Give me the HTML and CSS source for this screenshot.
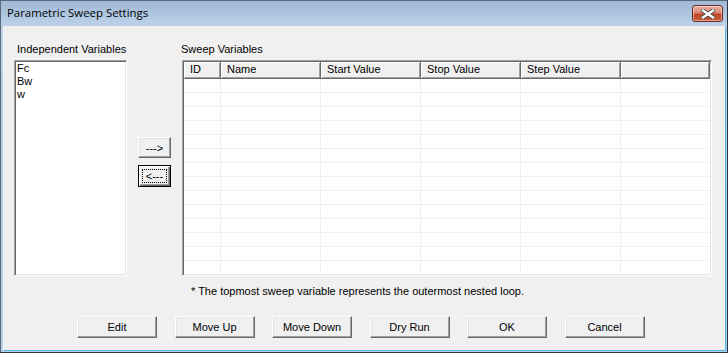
FILE: index.html
```html
<!DOCTYPE html>
<html lang="en">
<head>
    <meta charset="UTF-8">
    <meta name="viewport" content="width=device-width, initial-scale=1.0">
    <title>Parametric Sweep Settings</title>
    <link rel="stylesheet" href="styles.css">
</head>
<body>
    <div class="window">
        <!-- Title Bar -->
        <div class="titlebar">
            <span class="title">Parametric Sweep Settings</span>
            <button class="close-btn" title="Close">
                <svg width="14" height="10" viewBox="0 0 14 10">
                    <path d="M2 1.5 L12 8.5 M12 1.5 L2 8.5" stroke="#4a4a4a" stroke-width="4.2" stroke-linecap="square" fill="none"/>
                    <path d="M2 1.5 L12 8.5 M12 1.5 L2 8.5" stroke="#ffffff" stroke-width="2.4" stroke-linecap="square" fill="none"/>
                </svg>
            </button>
        </div>

        <div class="client">
            <div class="main">
                <!-- Independent Variables -->
                <div class="var-col">
                    <div class="label">Independent Variables</div>
                    <div class="listbox">
                        <div class="list-item">Fc</div>
                        <div class="list-item">Bw</div>
                        <div class="list-item">w</div>
                    </div>
                </div>

                <!-- Move Buttons -->
                <div class="arrow-col">
                    <button class="btn arrow-btn">---&gt;</button>
                    <button class="btn arrow-btn focused"><span class="focus-rect">&lt;---</span></button>
                </div>

                <!-- Sweep Variables -->
                <div class="sweep-col">
                    <div class="label sweep-label">Sweep Variables</div>
                    <div class="grid">
                        <div class="grid-col col-id">
                            <div class="grid-head">ID</div>
                            <div class="grid-body"></div>
                        </div>
                        <div class="grid-col col-wide">
                            <div class="grid-head">Name</div>
                            <div class="grid-body"></div>
                        </div>
                        <div class="grid-col col-wide">
                            <div class="grid-head">Start Value</div>
                            <div class="grid-body"></div>
                        </div>
                        <div class="grid-col col-wide">
                            <div class="grid-head">Stop Value</div>
                            <div class="grid-body"></div>
                        </div>
                        <div class="grid-col col-wide">
                            <div class="grid-head">Step Value</div>
                            <div class="grid-body"></div>
                        </div>
                        <div class="grid-col col-fill">
                            <div class="grid-head"></div>
                            <div class="grid-body"></div>
                        </div>
                    </div>
                    <div class="note">* The topmost sweep variable represents the outermost nested loop.</div>
                </div>
            </div>

            <!-- Dialog Buttons -->
            <div class="actions">
                <button class="btn action-btn">Edit</button>
                <button class="btn action-btn">Move Up</button>
                <button class="btn action-btn">Move Down</button>
                <button class="btn action-btn">Dry Run</button>
                <button class="btn action-btn">OK</button>
                <button class="btn action-btn">Cancel</button>
            </div>
        </div>
    </div>
</body>
</html>
```

FILE: styles.css
```css
/* General Layout */
body {
    margin: 0;
    padding: 0;
    font-family: "Liberation Sans", Arial, sans-serif;
    font-size: 11px;
    color: #000;
    background-color: #fff;
}

/* Window Frame */
.window {
    box-sizing: border-box;
    width: 728px;
    height: 353px;
    border: 1px solid #5a6878;
    border-right-color: #28343f;
    border-bottom-color: #28343f;
    background: linear-gradient(#9fb8d5, #bdd2e9 25px, #b4d0ec);
    display: flex;
    flex-direction: column;
}

/* Title Bar */
.titlebar {
    height: 25px;
    display: flex;
    align-items: flex-start;
    justify-content: space-between;
}

.title {
    font-family: "Open Sans", "Noto Sans", sans-serif;
    font-size: 11.4px;
    line-height: 16px;
    margin: 4px 0 0 6px;
    color: #000;
}

.close-btn {
    margin: 4px 4px 0 0;
    width: 31px;
    height: 17px;
    padding: 0;
    border: 1px solid #6a2b22;
    border-radius: 3px;
    background: linear-gradient(#eab0a2, #d98772 45%, #c2452a 55%, #c8583a);
    box-shadow: inset 0 0 0 1px rgba(255, 255, 255, 0.45);
    display: flex;
    align-items: center;
    justify-content: center;
}

/* Client Area */
.client {
    flex: 1;
    margin: 0 2px 2px 2px;
    background-color: #f0f0f0;
    box-shadow: 1px 1px 0 #4fb6e6;
}

.main {
    display: flex;
    padding: 16px 0 0 11px;
}

.label {
    line-height: 14px;
    height: 14px;
    margin-bottom: 4px;
    padding-left: 3px;
    white-space: nowrap;
}

.sweep-label {
    padding-left: 0;
    margin-left: -1px;
}

/* List Box */
.var-col {
    width: 113px;
}

.listbox {
    box-sizing: border-box;
    height: 216px;
    background-color: #fff;
    border: 1px solid;
    border-color: #a0a0a0 #fff #fff #a0a0a0;
    box-shadow: inset 1px 1px 0 #696969, inset -1px -1px 0 #e3e3e3;
    padding: 1px 0 0 2px;
}

.list-item {
    line-height: 13px;
    height: 13px;
}

/* Buttons */
.btn {
    box-sizing: border-box;
    font-family: "Liberation Sans", Arial, sans-serif;
    font-size: 11px;
    color: #000;
    background-color: #f0f0f0;
    border: 1px solid;
    border-color: #fff #696969 #696969 #fff;
    box-shadow: inset -1px -1px 0 #a0a0a0, inset 1px 1px 0 #e3e3e3;
    padding: 0;
    cursor: pointer;
}

.arrow-col {
    width: 33px;
    margin-left: 11px;
    padding-top: 95px;
    display: flex;
    flex-direction: column;
    gap: 7px;
}

.arrow-btn {
    width: 33px;
    height: 21px;
}

.arrow-btn.focused {
    height: 22px;
    border-color: #000;
    box-shadow: inset 1px 1px 0 #fff, inset -1px -1px 0 #696969, inset -2px -2px 0 #a0a0a0;
    display: flex;
    padding: 3px;
}

.focus-rect {
    flex: 1;
    border: 1px dotted #000;
    display: flex;
    align-items: center;
    justify-content: center;
}

/* Sweep Grid */
.sweep-col {
    margin-left: 11px;
    width: 530px;
}

.grid {
    box-sizing: border-box;
    height: 216px;
    display: flex;
    background-color: #fff;
    border: 1px solid;
    border-color: #a0a0a0 #fff #fff #a0a0a0;
    box-shadow: inset 1px 1px 0 #696969, inset -1px -1px 0 #e3e3e3;
    padding: 1px 1px 1px 1px;
}

.grid-col {
    display: flex;
    flex-direction: column;
}

.col-id {
    width: 37px;
}

.col-wide {
    width: 100px;
}

.col-fill {
    flex: 1;
}

.grid-head {
    box-sizing: border-box;
    height: 17px;
    line-height: 15px;
    padding-left: 6px;
    background-color: #f0f0f0;
    border-right: 1px solid #696969;
    border-bottom: 1px solid #696969;
    box-shadow: inset 1px 1px 0 #fff, inset -1px -1px 0 #a0a0a0;
    white-space: nowrap;
}

.grid-body {
    flex: 1;
    border-right: 1px solid #f0f0f0;
    background: repeating-linear-gradient(to bottom, #fff 0 13px, #f0f0f0 13px 14px);
}

.col-fill .grid-body {
    border-right: none;
}

.note {
    margin-top: 8px;
    line-height: 14px;
    padding-left: 9px;
    white-space: nowrap;
}

/* Dialog Actions */
.actions {
    display: flex;
    gap: 17.5px;
    padding-left: 74px;
    margin-top: 18px;
}

.action-btn {
    width: 80px;
    height: 22px;
}
```
